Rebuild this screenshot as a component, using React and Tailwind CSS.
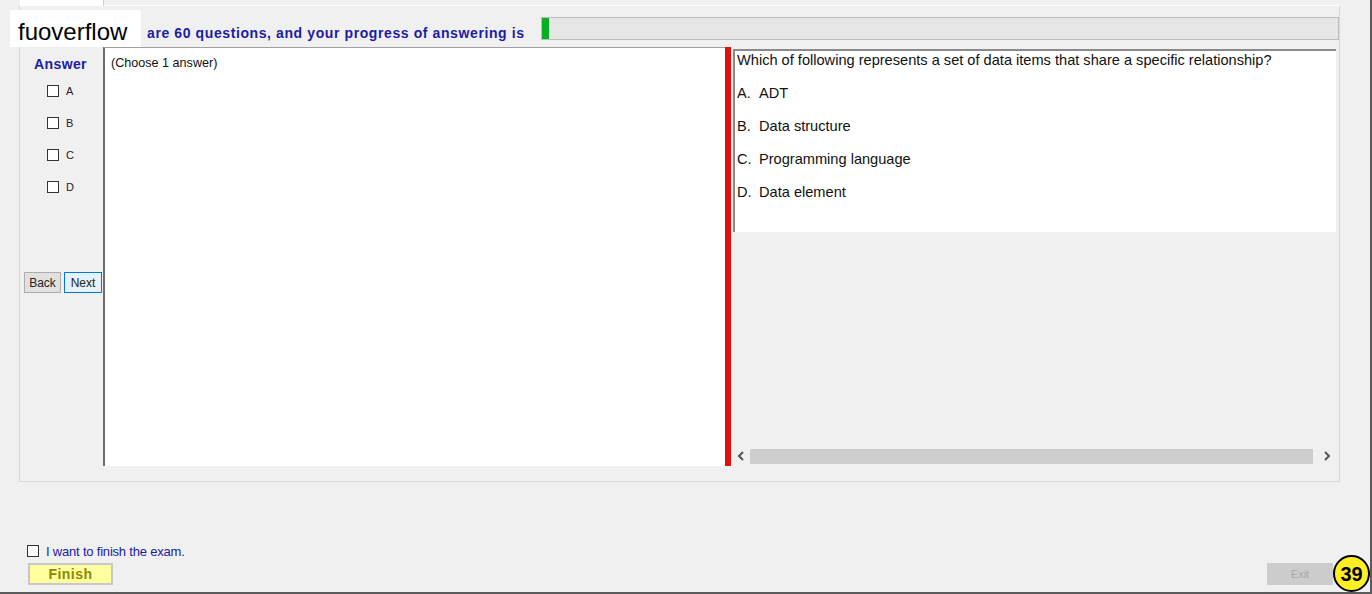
import React from 'react';

const options = ['A', 'B', 'C', 'D'];

const choices = [
  ['A.', 'ADT'],
  ['B.', 'Data structure'],
  ['C.', 'Programming language'],
  ['D.', 'Data element'],
];

// small square checkbox like the WinForms one
const Box = ({ className = '' }) => (
  <span className={`inline-block w-[12px] h-[12px] border border-[#333] bg-white ${className}`} />
);

const Chevron = ({ dir }) => (
  <svg width="8" height="10" viewBox="0 0 8 10">
    <path
      d={dir === 'left' ? 'M6 1 L2 5 L6 9' : 'M2 1 L6 5 L2 9'}
      fill="none"
      stroke="#555"
      strokeWidth="2"
    />
  </svg>
);

const App = () => {
  return (
    <div className="relative w-[1372px] h-[594px] overflow-hidden bg-[#f0f0f0] border-r-2 border-b-2 border-r-[#5a5a5a] border-b-[#5a5a5a] font-['Liberation_Sans',Arial,sans-serif]">
      {/* tab strip */}
      <div className="h-[5px] flex">
        <div className="ml-[20px] w-[84px] h-[6px] bg-white border-r border-[#d0d0d0]" />
      </div>

      {/* main tab panel */}
      <div className="ml-[19px] w-[1321px] h-[477px] border border-[#d9d9d9] border-t-white pl-[4px] flex flex-col">
        {/* header (start of sentence hidden under the watermark) */}
        <div className="h-[41px] flex items-center">
          <div className="w-[517px] pl-[123px] pt-[13px] text-[14px] tracking-[0.6px] font-bold text-[#1c1ca8] whitespace-nowrap">
            are 60 questions, and your progress of answering is
          </div>
          <div className="mt-[4px] w-[798px] h-[23px] bg-[#e6e6e6] border border-[#bcbcbc] flex">
            <div className="w-[7px] h-full bg-[#06b025]" />
          </div>
        </div>

        {/* body */}
        <div className="flex h-[419px]">
          {/* left answer column */}
          <div className="w-[79px] flex flex-col">
            <div className="pl-[10px] pt-[7px] text-[14px] tracking-[0.4px] font-bold text-[#1c1ca8]">Answer</div>
            <div className="flex flex-col gap-[18px] pl-[23px] pt-[9px]">
              {options.map((o) => (
                <div key={o} className="flex items-center h-[14px] text-[11px] text-[#222]">
                  <Box />
                  <span className="ml-[7px]">{o}</span>
                </div>
              ))}
            </div>
            <div className="flex gap-[3px] mt-[78px]">
              <div className="w-[37px] h-[21px] bg-[#e1e1e1] border border-[#adadad] text-[12px] text-[#222] flex items-center justify-center">Back</div>
              <div className="w-[38px] h-[21px] bg-[#e5f1fb] border border-[#0078d7] text-[12px] text-[#222] flex items-center justify-center">Next</div>
            </div>
          </div>

          {/* middle white area */}
          <div className="w-[622px] h-full bg-white border-l-2 border-t border-l-[#6d6d6d] border-t-[#a0a0a0] pl-[6px] pt-[6px] text-[12.6px] text-[#111]">
            (Choose 1 answer)
          </div>

          {/* red splitter */}
          <div className="w-[6px] h-full bg-[#e01010]" />

          {/* right question area */}
          <div className="w-[608px] h-full flex flex-col">
            <div className="ml-[2px] mt-[2px] w-[603px] h-[183px] bg-white border-l-2 border-t-2 border-l-[#8a8a8a] border-t-[#8a8a8a] pl-[2px] text-[14.6px] text-[#111]">
              <div className="h-[33px] -mt-[1px]">Which of following represents a set of data items that share a specific relationship?</div>
              {choices.map(([l, t]) => (
                <div key={l} className="h-[33px] flex">
                  <span className="w-[22px]">{l}</span>
                  <span>{t}</span>
                </div>
              ))}
            </div>
            <div className="mt-auto mb-[2px] ml-[6px] w-[600px] h-[16px] flex items-center">
              <span className="w-[13px] flex items-center"><Chevron dir="left" /></span>
              <div className="w-[563px] h-[15px] bg-[#cdcdcd]" />
              <span className="ml-auto mr-[6px] flex items-center"><Chevron dir="right" /></span>
            </div>
          </div>
        </div>
      </div>

      {/* bottom area */}
      <div className="pl-[27px] pt-[62px]">
        <div className="flex items-center h-[14px]">
          <Box />
          <span className="ml-[7px] pt-[2px] text-[13px] tracking-[-0.2px] text-[#2020a0]">I want to finish the exam.</span>
        </div>
      </div>
      <div className="flex items-start pl-[28px] pt-[5px]">
        <div className="w-[85px] h-[22px] bg-[#ffff9f] border-2 border-[#c8c8c8] text-[14px] tracking-[0.5px] font-bold text-[#8a8a00] flex items-center justify-center">Finish</div>
        <div className="ml-auto mr-[37px] w-[66px] h-[22px] bg-[#cccccc] text-[11px] text-[#a8a8a8] flex items-center justify-center">Exit</div>
      </div>

      {/* watermark overlays */}
      <div className="absolute left-[10px] top-[10px] w-[131px] h-[37px] bg-white flex items-center pl-[8px] pt-[6px] text-[24px] text-black font-['Liberation_Sans',Arial,sans-serif]">
        fuoverflow
      </div>
      <div className="absolute left-[1333px] top-[555px] w-[37px] h-[37px] rounded-full bg-[#ffee22] border-2 border-black flex items-center justify-center text-[20px] font-bold text-black">
        39
      </div>
    </div>
  );
};

export default App;
